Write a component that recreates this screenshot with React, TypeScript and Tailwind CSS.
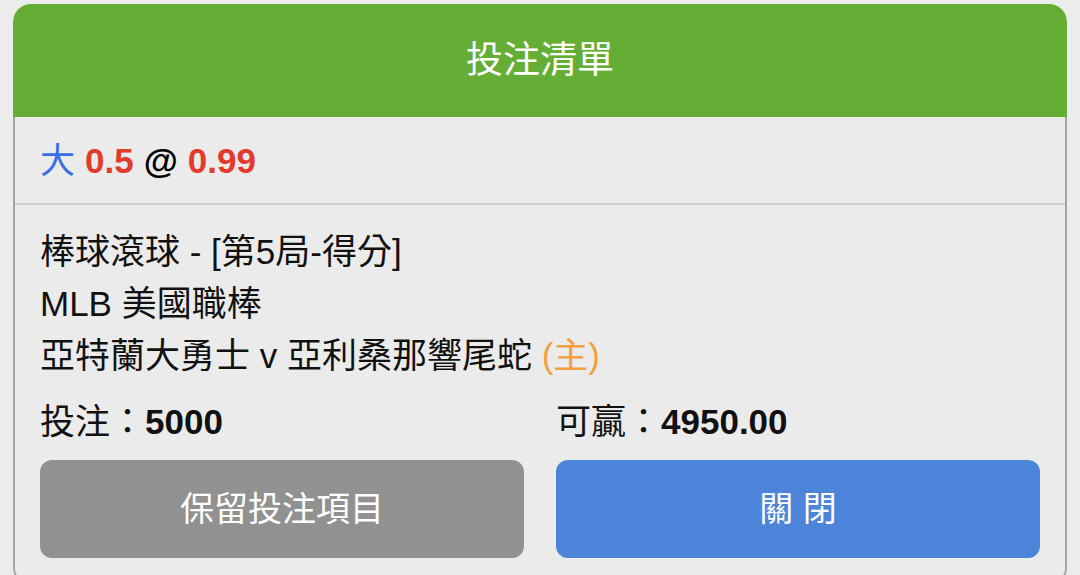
export default function App() {
  const font = { fontFamily: '"Liberation Sans", "Noto Sans CJK TC", sans-serif' };
  return (
    <div className="min-h-[575px] bg-[#ececec] px-[13px] pt-[4px]" style={font}>
      <div className="overflow-hidden rounded-[18px]">
        {/* header */}
        <div className="flex h-[113px] items-center justify-center bg-[#65ae35] text-[37px] text-white">
          投注清單
        </div>

        <div className="rounded-b-[18px] border-x-2 border-b-2 border-[#a3a3a3] bg-[#ebebeb]">
          {/* selection */}
          <div className="flex h-[88px] items-center border-b-2 border-[#cfcfcf] px-[25px] text-[35px] leading-none">
            <span className="text-[#356ee8]">大</span>
            <span className="ml-[10px] font-bold text-[#e23a2b]">0.5</span>
            <span className="ml-[10px] font-bold text-black">@</span>
            <span className="ml-[10px] font-bold text-[#e23a2b]">0.99</span>
          </div>

          {/* details */}
          <div className="px-[25px] pt-[21px] pb-[26px] text-[35px] text-[#111]">
            <div className="leading-[52px]">棒球滾球 - [第5局-得分]</div>
            <div className="leading-[52px]">MLB 美國職棒</div>
            <div className="leading-[52px]">
              亞特蘭大勇士 v 亞利桑那響尾蛇 <span className="text-[#f3a040]">(主)</span>
            </div>

            <div className="mt-[14px] grid grid-cols-2 gap-x-[32px] leading-[52px]">
              <div>
                投注：<span className="font-bold">5000</span>
              </div>
              <div>
                可贏：<span className="font-bold">4950.00</span>
              </div>
            </div>

            <div className="mt-[12px] grid grid-cols-2 gap-x-[32px]">
              <button className="flex h-[98px] items-center justify-center rounded-[12px] bg-[#919191] text-[34px] text-white">
                保留投注項目
              </button>
              <button className="flex h-[98px] items-center justify-center rounded-[12px] bg-[#4b84d8] text-[34px] text-white">
                關 閉
              </button>
            </div>
          </div>
        </div>
      </div>
    </div>
  );
}
